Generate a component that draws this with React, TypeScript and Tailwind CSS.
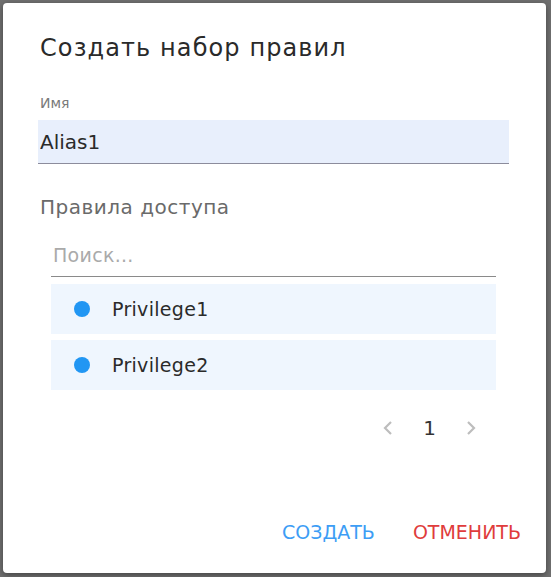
import React, { useState } from 'react';

const font = { fontFamily: '"DejaVu Sans", "Noto Sans", sans-serif' };

const privileges = ['Privilege1', 'Privilege2'];

const App = () => {
  const [name, setName] = useState('Alias1');
  const [search, setSearch] = useState('');

  return (
    <div className="w-[551px] h-[577px] bg-[#707070] pl-[3px] pt-[3px] overflow-hidden" style={font}>
      <div className="w-[543px] h-[570px] bg-white rounded-[4px] shadow-[0_2px_6px_rgba(0,0,0,0.4)] flex flex-col">
        {/* header */}
        <h2 className="pl-[37px] pt-[28px] text-[24px] leading-[34px] tracking-[1.1px] text-[#2a2a2a] font-normal">
          Создать набор правил
        </h2>

        {/* name field */}
        <div className="pl-[35px] pr-[37px] mt-[29px]">
          <label className="block pl-[2px] text-[14px] leading-[18px] text-[#7a7a7a]">Имя</label>
          <input
            className="mt-[8px] w-full h-[44px] bg-[#e8effc] border-b border-[#8c8c9c] px-[2px] text-[20px] text-[#2a2a2a] outline-none"
            value={name}
            onChange={(e) => setName(e.target.value)}
          />
        </div>

        {/* privileges */}
        <div className="pl-[37px] mt-[30px] text-[20px] leading-[26px] tracking-[0.5px] text-[#6a6a6a]">Правила доступа</div>

        <div className="pl-[48px] pr-[50px] mt-[13px]">
          <input
            className="w-full h-[44px] border-b border-[#8a8a8a] px-[2px] text-[19px] tracking-[0.3px] text-[#2a2a2a] placeholder:text-[#aaa] outline-none"
            placeholder="Поиск..."
            value={search}
            onChange={(e) => setSearch(e.target.value)}
          />
          <div className="mt-[7px] flex flex-col gap-[6px]">
            {privileges
              .filter((p) => p.toLowerCase().includes(search.toLowerCase()))
              .map((p) => (
                <div key={p} className="h-[50px] bg-[#eff6fe] flex items-center pl-[23px]">
                  <span className="w-[16px] h-[16px] rounded-full bg-[#2196f3]" />
                  <span className="ml-[22px] text-[19px] tracking-[0.3px] text-[#2a2a2a]">{p}</span>
                </div>
              ))}
          </div>

          {/* pagination */}
          <div className="mt-[23px] flex justify-end items-center pr-[20px] text-[#bdbdbd]">
            <button className="flex">
              <svg width="10" height="16" viewBox="0 0 10 16" fill="none">
                <path d="M8 2 L2 8 L8 14" stroke="currentColor" strokeWidth="2.2" />
              </svg>
            </button>
            <span className="mx-[30px] text-[20px] text-[#333]">1</span>
            <button className="flex">
              <svg width="10" height="16" viewBox="0 0 10 16" fill="none">
                <path d="M2 2 L8 8 L2 14" stroke="currentColor" strokeWidth="2.2" />
              </svg>
            </button>
          </div>
        </div>

        {/* actions */}
        <div className="mt-auto mb-[27px] flex justify-end items-center pr-[25px] gap-[38px] text-[19px]">
          <button className="uppercase text-[#3d9df5]">Создать</button>
          <button className="uppercase text-[#e03c3c]">Отменить</button>
        </div>
      </div>
    </div>
  );
};

export default App;
